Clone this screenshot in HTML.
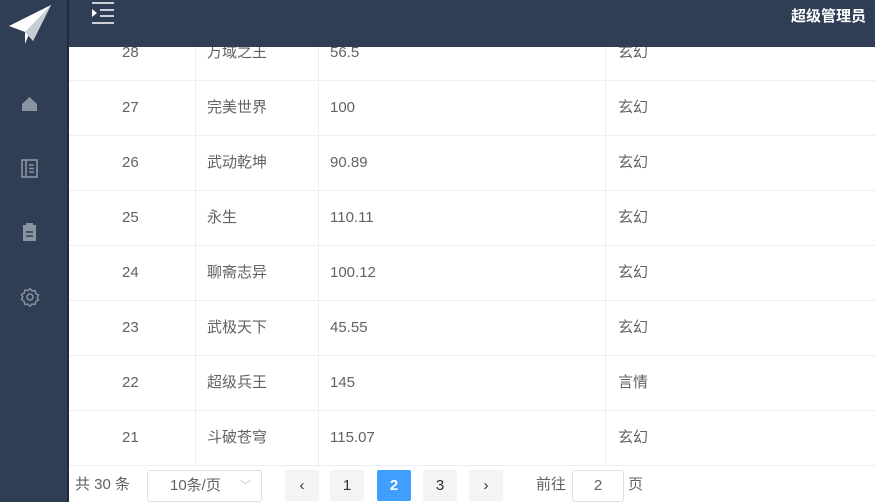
<!DOCTYPE html><html><head><meta charset="utf-8"><style>
body{margin:0;width:875px;height:502px;overflow:hidden;font-family:"Liberation Sans","Noto Sans CJK SC",sans-serif;background:#fff;position:relative}
.side{position:absolute;left:0;top:0;width:67px;height:502px;background:#2f3e54;border-right:2px solid #1f2a3a}
.head{position:absolute;left:69px;top:0;right:0;height:47px;background:#2f3e54;z-index:2}
.user{position:absolute;right:9px;top:5px;color:#fff;font-size:15px;font-weight:bold}
.row{position:absolute;left:69px;right:0;height:55px;border-bottom:1px solid #ebeef5;font-size:15px;color:#606266}
.row span{position:absolute;top:0;line-height:55px}
.vl{position:absolute;top:0;bottom:37px;width:1px;background:#ebeef5}
.pg{position:absolute;top:470px;height:30px;line-height:30px;font-size:15px;color:#606266}
.btn{position:absolute;top:470px;width:34px;height:31px;background:#f4f4f5;border-radius:2px;text-align:center;line-height:31px;font-size:15px;color:#303133}
</style></head><body>
<div class="side">
<svg style="position:absolute;left:8px;top:4px" width="44" height="40" viewBox="0 0 44 40"><polygon points="1,22 43,1 25,37 21,30 17,40 17,28" fill="#fff"/><polygon points="17,28 43,1 25,37" fill="#c8cdd4"/></svg>
<svg style="position:absolute;left:21px;top:96px" width="17" height="16"><path d="M1,8 L8.5,1 L16,8 L16,15 L1,15Z" fill="#8a93a0"/></svg>
<svg style="position:absolute;left:21px;top:159px" width="17" height="20"><rect x="1" y="1" width="15" height="17" fill="none" stroke="#8a93a0" stroke-width="1.6"/><line x1="5" y1="1" x2="5" y2="18" stroke="#8a93a0" stroke-width="1.6"/><path d="M8 6h5M8 9.5h5M8 13h5" stroke="#8a93a0" stroke-width="1.4"/></svg>
<svg style="position:absolute;left:22px;top:222px" width="15" height="20"><rect x="1" y="3" width="13" height="16" fill="#8a93a0"/><rect x="4" y="1" width="7" height="4" fill="#8a93a0"/><path d="M4 10h7M4 14h7" stroke="#2f3e54" stroke-width="1.5"/></svg>
<svg style="position:absolute;left:20px;top:287px" width="20" height="20" viewBox="0 0 20 20"><circle cx="10" cy="10" r="3" fill="none" stroke="#8a93a0" stroke-width="1.5"/><path d="M10 1.5l2 2.5 3-.5.8 3 2.7 1.5-1.3 2.5 1.3 2.5-2.7 1.5-.8 3-3-.5-2 2.5-2-2.5-3 .5-.8-3L1.5 12.5 2.8 10 1.5 7.5 4.2 6l.8-3 3 .5z" fill="none" stroke="#8a93a0" stroke-width="1.4"/></svg>
</div>
<div class="head">
<svg style="position:absolute;left:22px;top:1px" width="24" height="24"><path d="M1 2h22M9 9h14M9 15h14M1 22h22" stroke="#fff" stroke-width="1.5"/><polygon points="1,8 6,12 1,16" fill="#fff"/></svg>
<div class="user">超级管理员</div></div>
<div class="vl" style="left:195px"></div><div class="vl" style="left:318px"></div><div class="vl" style="left:605px"></div>
<div class="row" style="top:25px"><span style="left:53px">28</span><span style="left:138px">万域之王</span><span style="left:261px">56.5</span><span style="left:549px">玄幻</span></div>
<div class="row" style="top:80px"><span style="left:53px">27</span><span style="left:138px">完美世界</span><span style="left:261px">100</span><span style="left:549px">玄幻</span></div>
<div class="row" style="top:135px"><span style="left:53px">26</span><span style="left:138px">武动乾坤</span><span style="left:261px">90.89</span><span style="left:549px">玄幻</span></div>
<div class="row" style="top:190px"><span style="left:53px">25</span><span style="left:138px">永生</span><span style="left:261px">110.11</span><span style="left:549px">玄幻</span></div>
<div class="row" style="top:245px"><span style="left:53px">24</span><span style="left:138px">聊斋志异</span><span style="left:261px">100.12</span><span style="left:549px">玄幻</span></div>
<div class="row" style="top:300px"><span style="left:53px">23</span><span style="left:138px">武极天下</span><span style="left:261px">45.55</span><span style="left:549px">玄幻</span></div>
<div class="row" style="top:355px"><span style="left:53px">22</span><span style="left:138px">超级兵王</span><span style="left:261px">145</span><span style="left:549px">言情</span></div>
<div class="row" style="top:410px"><span style="left:53px">21</span><span style="left:138px">斗破苍穹</span><span style="left:261px">115.07</span><span style="left:549px">玄幻</span></div>
<div class="pg" style="left:75px">共 30 条</div>
<div class="pg" style="left:147px;width:115px;height:32px;border:1px solid #dcdfe6;border-radius:3px;box-sizing:border-box;line-height:30px;padding-left:22px">10条/页<span style="position:absolute;right:10px;color:#c0c4cc;font-size:11px">﹀</span></div>
<div class="btn" style="left:285px">‹</div>
<div class="btn" style="left:330px">1</div>
<div class="btn" style="left:377px;background:#409eff;color:#fff;font-weight:bold">2</div>
<div class="btn" style="left:423px">3</div>
<div class="btn" style="left:469px">›</div>
<div class="pg" style="left:536px">前往</div>
<div class="pg" style="left:572px;width:52px;height:32px;border:1px solid #dcdfe6;border-radius:3px;box-sizing:border-box;text-align:center;line-height:30px">2</div>
<div class="pg" style="left:628px">页</div>
</body></html>
